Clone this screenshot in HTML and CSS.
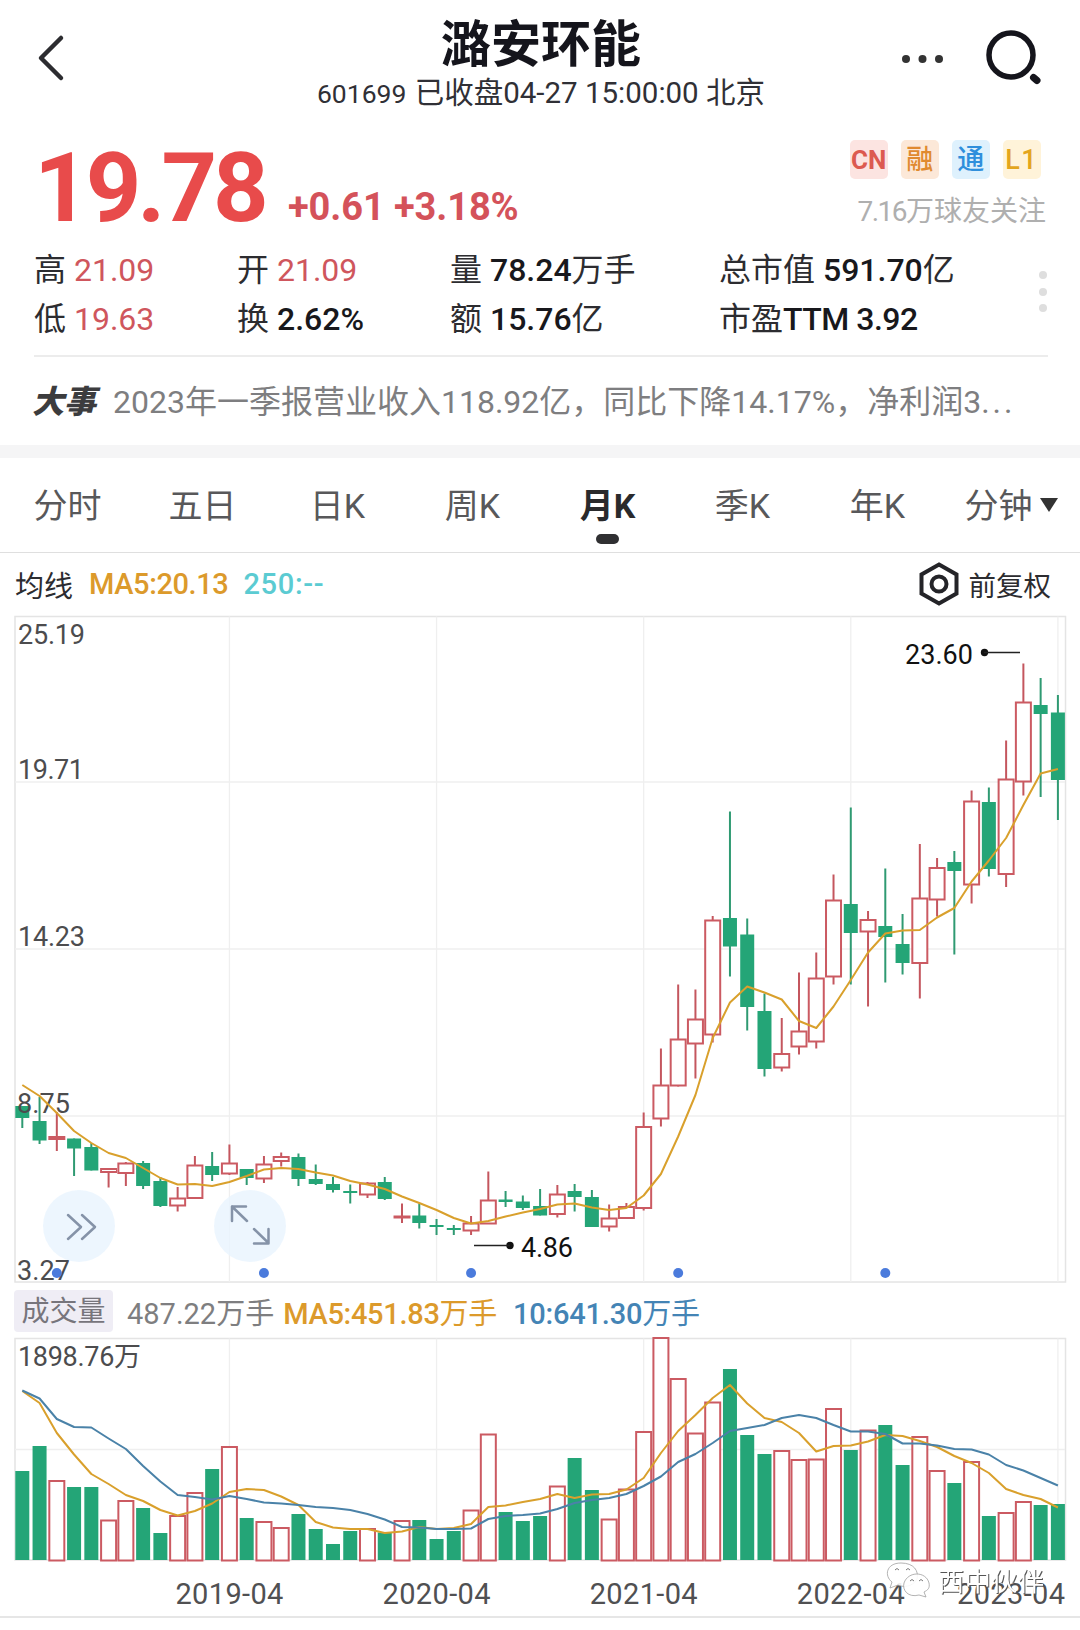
FILE: index.html
```html
<!DOCTYPE html>
<html lang="zh-CN">
<head>
    <meta charset="UTF-8">
    <meta name="viewport" content="width=device-width, initial-scale=1.0">
    <title>潞安环能 601699</title>
    <link rel="stylesheet" href="styles.css">
</head>
<body>

    <header class="topbar">
        <svg class="icon-back" width="30" height="48" viewBox="0 0 30 48"><path d="M26 4 L6 24 L26 44"/></svg>
        <div class="title">
            <h1>潞安环能</h1>
            <p><span class="code">601699</span> 已收盘04-27 15:00:00 北京</p>
        </div>
        <svg class="icon-more" width="44" height="10" viewBox="0 0 44 10"><circle cx="5" cy="5" r="4"/><circle cx="21.500" cy="5" r="4"/><circle cx="38" cy="5" r="4"/></svg>
        <svg class="icon-search" width="58" height="58" viewBox="0 0 58 58"><circle cx="27" cy="27" r="22"/><path d="M49.500 49.500 L53 52.500"/></svg>
    </header>

    <section class="quote">
        <div class="price">19.78</div>
        <div class="change">+0.61 +3.18%</div>
        <div class="side">
            <div class="tags">
                <span class="tag tag-cn">CN</span>
                <span class="tag tag-rong">融</span>
                <span class="tag tag-tong">通</span>
                <span class="tag tag-l1">L1</span>
            </div>
            <div class="followers"><span>7.16</span>万球友关注</div>
        </div>
    </section>

    <section class="stats">
        <div>高 <b class="up">21.09</b></div>
        <div>开 <b class="up">21.09</b></div>
        <div>量 <b>78.24</b><em>万手</em></div>
        <div>总市值 <b>591.70</b><em>亿</em></div>
        <div>低 <b class="up">19.63</b></div>
        <div>换 <b>2.62%</b></div>
        <div>额 <b>15.76</b><em>亿</em></div>
        <div>市盈<b class="ttm">TTM 3.92</b></div>
        <div class="dots"><i></i><i></i><i></i></div>
    </section>

    <section class="news">
        <strong>大事</strong>
        <span>2023年一季报营业收入118.92亿，同比下降14.17%，净利润3<i>...</i></span>
    </section>

    <nav class="tabs">
        <span>分时</span>
        <span>五日</span>
        <span>日K</span>
        <span>周K</span>
        <span class="active">月K</span>
        <span>季K</span>
        <span>年K</span>
        <span>分钟<i class="caret"></i></span>
    </nav>

    <div class="legend">
        <span class="name">均线</span>
        <span class="ma5">MA5:20.13</span>
        <span class="ma250">250:--</span>
        <span class="adjust">
            <svg width="42" height="44" viewBox="0 0 42 44"><path d="M21 2.500 L38.500 12.500 V31.500 L21 41.500 L3.500 31.500 V12.500 Z"/><circle cx="21" cy="22" r="7.500"/></svg>
            前复权
        </span>
    </div>

    <svg class="chart" id="priceChart" width="1080" height="670" viewBox="0 615 1080 670"></svg>

    <div class="vol-legend">
        <span class="badge">成交量</span>
        <span class="total">487.22万手</span>
        <span class="ma5">MA5:451.83<em>万手</em></span>
        <span class="ma10">10:641.30<em>万手</em></span>
    </div>

    <svg class="chart" id="volumeChart" width="1080" height="226" viewBox="0 1336 1080 226"></svg>

    <footer class="dates">
        <svg id="dateAxis" width="1080" height="54" viewBox="0 1562 1080 54"></svg>
    </footer>

    <script src="script.js"></script>
</body>
</html>
```
FILE: styles.css
```css
* {
    margin: 0;
    padding: 0;
    box-sizing: border-box;
}

body {
    width: 1080px;
    height: 1630px;
    overflow: hidden;
    background-color: #fff;
    color: #2c2c30;
    font-family: Roboto, "Noto Sans CJK SC", sans-serif;
}

svg {
    display: block;
    flex-shrink: 0;
}

em {
    font-style: normal;
    font-weight: 400;
}

/* header */
.topbar {
    display: flex;
    height: 116px;
    padding-left: 35px;
}

.icon-back {
    margin-top: 34px;
    fill: none;
    stroke: #2c2c30;
    stroke-width: 4.5;
    stroke-linecap: round;
    stroke-linejoin: round;
}

.title {
    width: 600px;
    margin-left: 176px;
    text-align: center;
    white-space: nowrap;
}

.title h1 {
    margin-top: 12px;
    font-size: 50px;
    line-height: 66px;
    font-weight: 700;
    color: #15151c;
}

.title p {
    margin-top: -2px;
    font-size: 29.5px;
    line-height: 34px;
    color: #303036;
}

.title .code {
    margin-right: 1px;
    font-size: 26.5px;
}

.icon-more {
    margin: 54px 0 0 60px;
    fill: #333;
}

.icon-search {
    margin: 28px 0 0 39px;
    fill: none;
    stroke: #15151c;
    stroke-width: 5.5;
    stroke-linecap: round;
}

.icon-search path {
    stroke-width: 7;
}

/* last price */
.quote {
    display: flex;
    height: 130px;
    padding-left: 34px;
    color: #e84b4b;
    font-weight: 700;
    white-space: nowrap;
}

.price {
    width: 254px;
    margin-top: 24px;
    font-size: 97px;
    line-height: 96px;
    letter-spacing: -4px;
}

.change {
    margin-top: 69px;
    font-size: 38px;
    line-height: 44px;
    color: #d4525a;
    letter-spacing: -0.1px;
}

.side {
    margin-left: auto;
    padding: 24px 34px 0 0;
}

.tags {
    display: flex;
    justify-content: flex-end;
    gap: 12.5px;
    padding-right: 5px;
}

.tag {
    width: 38.5px;
    height: 39px;
    border-radius: 5px;
    font-size: 27px;
    line-height: 40px;
    font-weight: 500;
    text-align: center;
}

.tag-cn {
    background-color: #fce4e1;
    color: #dc5a50;
    font-size: 26px;
    font-weight: 700;
}

.tag-rong {
    background-color: #fce8d8;
    color: #e08a30;
}

.tag-tong {
    background-color: #def1fd;
    color: #2f8fdc;
}

.tag-l1 {
    background-color: #fff3d9;
    color: #e3a51d;
    letter-spacing: 1.5px;
}

.followers {
    margin-top: 15px;
    font-size: 28px;
    line-height: 36px;
    font-weight: 400;
    color: #afafaf;
    text-align: right;
}

.followers span {
    letter-spacing: -1.5px;
}

/* stats */
.stats {
    position: relative;
    display: grid;
    grid-template-columns: 203px 213px 269px 1fr;
    grid-auto-rows: 49px;
    height: 111px;
    margin: 0 32px 0 34px;
    border-bottom: 2px solid #ececec;
    font-size: 32px;
    line-height: 48px;
    white-space: nowrap;
}

.stats b {
    color: #18181c;
    font-weight: 500;
}

.stats .up {
    color: #cf565d;
    font-weight: 400;
}

.stats .ttm {
    letter-spacing: -0.5px;
}

.dots {
    position: absolute;
    right: 1px;
    top: 25px;
}

.dots i {
    display: block;
    width: 8px;
    height: 8px;
    margin-bottom: 8.5px;
    border-radius: 50%;
    background-color: #dedede;
}

/* news line */
.news {
    display: flex;
    align-items: center;
    height: 88px;
    padding: 0 0 4px 32px;
    font-size: 32px;
    color: #7e7e80;
    white-space: nowrap;
}

.news strong {
    margin-right: 17px;
    font-weight: 900;
    font-style: italic;
    color: #3c3c3e;
}

.news i {
    font-style: normal;
    letter-spacing: 3px;
}

/* period tabs */
.tabs {
    display: grid;
    grid-template-columns: repeat(8, 135px);
    height: 108px;
    border-top: 13px solid #f5f5f6;
    border-bottom: 1px solid #dfdfdf;
    font-size: 34px;
    line-height: 97px;
    color: #58585a;
    text-align: center;
    white-space: nowrap;
}

.tabs .active {
    position: relative;
    color: #2a2a2c;
    font-weight: 700;
}

.tabs .active::after {
    content: "";
    position: absolute;
    left: 56px;
    top: 76px;
    width: 23px;
    height: 10px;
    border-radius: 5px;
    background-color: #303032;
}

.tabs span:last-child {
    margin-left: -3px;
}

.caret {
    display: inline-block;
    margin: 0 0 6px 7px;
    border: 9px solid transparent;
    border-top: 14px solid #333;
    border-bottom: 0;
}

/* chart legends */
.legend {
    display: flex;
    align-items: center;
    height: 62px;
    padding: 0 29px 0 15px;
    font-size: 29px;
    white-space: nowrap;
}

.ma5 {
    color: #dc9a2b;
    font-weight: 500;
}

.legend .ma5 {
    margin: 0 15px 0 16px;
    letter-spacing: -0.4px;
}

.ma250 {
    color: #5bcbd2;
    font-weight: 500;
    letter-spacing: 0.7px;
}

.adjust {
    display: flex;
    align-items: center;
    gap: 9px;
    margin-left: auto;
    font-size: 27.5px;
}

.adjust svg {
    fill: none;
    stroke: #242428;
    stroke-width: 4;
}

.vol-legend {
    display: flex;
    align-items: center;
    height: 51px;
    padding: 1px 14px 0;
    font-size: 29px;
    white-space: nowrap;
}

.badge {
    width: 99px;
    height: 42px;
    margin-right: 14px;
    border-radius: 4px;
    background-color: #efedf5;
    font-size: 28px;
    line-height: 43px;
    text-align: center;
    color: #77757c;
}

.total {
    margin-right: 9px;
    color: #7e7e80;
}

.vol-legend .ma5 {
    letter-spacing: -0.3px;
}

.ma10 {
    margin-left: 16px;
    color: #4484b5;
    font-weight: 500;
    letter-spacing: -0.2px;
}

.dates {
    border-bottom: 2px solid #e6e6e6;
}

/* chart parts */
.grid {
    fill: none;
    stroke: #efefef;
    stroke-width: 1.3;
}

.frame {
    fill: none;
    stroke: #e4e4e4;
    stroke-width: 1.5;
}

.rise {
    fill: #fff;
    stroke: #cb5a62;
    stroke-width: 2;
}

.fall {
    fill: #24a577;
    stroke: none;
}

.wick-rise {
    stroke: #c4565e;
    stroke-width: 2;
}

.wick-fall {
    stroke: #2f9a72;
    stroke-width: 2;
}

.line5,
.line10 {
    fill: none;
    stroke: #d9a02c;
    stroke-width: 2;
    stroke-linejoin: round;
}

.line10 {
    stroke: #4a82a8;
}

.axis {
    font-size: 27px;
    fill: #4c4c4e;
}

.date {
    font-size: 29px;
    fill: #505052;
}

.mark {
    font-size: 27px;
    fill: #111;
}

.mark-line {
    stroke: #222;
    stroke-width: 1.5;
}

.mark-dot {
    fill: #111;
}

.event {
    fill: #4b7bdc;
}

.round {
    fill: #e8f4fe;
    fill-opacity: 0.8;
}

.round-icon {
    fill: none;
    stroke: #8593a8;
    stroke-width: 2.5;
    stroke-linecap: round;
    stroke-linejoin: round;
}

.wm-icon {
    fill: #fff;
    fill-opacity: 0.9;
    stroke: #a0a0a0;
    stroke-width: 0.8;
}

.wm-eye {
    fill: none;
    stroke: #777;
}

.wm-text {
    font-size: 26px;
    fill: #fff;
    filter: drop-shadow(1.2px 1.2px 0 #555);
}
```
FILE: script.js
```js
// one row per month: direction, high, body top, body bottom, low, volume top
var months = [
    ['g', 1106, 1106, 1118, 1128, 1471],
    ['g', 1097, 1121, 1140.5, 1144, 1446],
    ['r', 1112, 1137, 1139, 1151, 1481],
    ['g', 1138.5, 1138.5, 1148.5, 1176, 1487],
    ['g', 1143, 1147, 1170.5, 1170.5, 1487],
    ['r', 1169, 1169, 1172, 1187.5, 1520.5],
    ['r', 1162, 1163.5, 1173, 1186, 1501],
    ['g', 1161, 1163, 1186, 1189, 1508],
    ['g', 1177, 1181, 1206, 1207, 1533],
    ['r', 1187, 1198.5, 1205.5, 1211.5, 1516],
    ['r', 1156, 1165.5, 1198, 1198, 1493],
    ['g', 1152, 1166, 1175, 1181, 1469],
    ['r', 1144.5, 1163.5, 1173.5, 1175, 1447],
    ['g', 1169, 1169, 1178, 1185, 1518],
    ['r', 1156, 1164.5, 1178.5, 1183, 1522],
    ['r', 1152.5, 1157, 1161, 1166.5, 1528],
    ['g', 1153.5, 1157, 1179, 1186, 1514],
    ['g', 1164.5, 1179, 1184, 1185, 1529],
    ['g', 1177, 1184, 1190, 1192.5, 1544],
    ['g', 1184.5, 1191, 1193, 1203.5, 1531],
    ['r', 1182, 1183.5, 1194.5, 1198, 1529],
    ['g', 1177, 1182, 1199, 1200, 1532.5],
    ['r', 1203.5, 1216.5, 1217.5, 1223, 1521],
    ['g', 1203.5, 1215.5, 1223, 1228.5, 1520],
    ['g', 1219, 1225, 1227, 1235, 1539],
    ['g', 1225, 1228, 1230, 1235, 1531],
    ['r', 1216, 1223.5, 1230.5, 1235, 1510.5],
    ['r', 1171.5, 1200.5, 1223.5, 1224, 1434.5],
    ['g', 1191, 1199.5, 1202, 1207, 1512],
    ['g', 1195.5, 1201.5, 1208, 1210, 1521],
    ['g', 1189, 1206, 1215.5, 1215.5, 1516],
    ['r', 1185, 1194.5, 1214, 1217.5, 1486.5],
    ['g', 1184, 1191, 1197, 1211.5, 1458],
    ['g', 1190, 1197, 1227, 1227, 1490],
    ['r', 1204.5, 1218.5, 1226.5, 1231.5, 1519.5],
    ['r', 1203, 1207, 1218, 1218, 1489.5],
    ['r', 1112.5, 1127, 1208, 1210.5, 1432],
    ['r', 1048.5, 1085.5, 1118.5, 1126.5, 1338],
    ['r', 984.5, 1039.5, 1085.5, 1086.5, 1379],
    ['r', 989.5, 1019.5, 1043.5, 1078.5, 1433.5],
    ['r', 916, 920.5, 1034.5, 1042.5, 1402.5],
    ['g', 811.5, 918, 946.5, 976.5, 1369],
    ['g', 918.5, 934.5, 1007, 1030.5, 1435],
    ['g', 993.5, 1011, 1069, 1076.5, 1454],
    ['r', 1018, 1054, 1067.5, 1071.5, 1451],
    ['r', 972.5, 1031.5, 1046.5, 1054.5, 1460],
    ['r', 952.5, 978.5, 1041.5, 1048.5, 1459.5],
    ['r', 874.5, 900.5, 976.5, 984.5, 1409],
    ['g', 807.5, 904, 933, 984.5, 1450],
    ['r', 911, 920, 931.5, 1006.5, 1430.5],
    ['g', 868.5, 926, 937, 982.5, 1425],
    ['g', 914, 944, 963, 974.5, 1465],
    ['r', 844, 898.5, 963, 998.5, 1437],
    ['r', 858, 868, 899.5, 916.5, 1471],
    ['g', 851, 862, 871, 954.5, 1483],
    ['r', 790.5, 801.5, 884.5, 903.5, 1462],
    ['g', 787.5, 802, 869, 876.5, 1516],
    ['r', 740.5, 779.5, 874, 887, 1513],
    ['r', 663.5, 702.5, 781.5, 795.5, 1502],
    ['g', 678, 705, 714, 797, 1505],
    ['g', 695, 712.5, 780, 820, 1504]
];

var priceMa5 = [1085, 1096, 1113, 1131, 1143, 1153, 1158, 1168, 1178, 1184.5, 1184, 1186, 1182, 1176, 1169.5, 1168, 1169, 1172.5, 1175.5, 1181, 1184.5, 1189, 1196.5, 1203, 1210, 1218, 1223.5, 1221, 1216.5, 1212.5, 1209, 1204.5, 1203.5, 1207.5, 1210, 1208, 1195.5, 1174, 1136.5, 1095, 1038, 1002.5, 986.5, 992.5, 999.5, 1021, 1028, 1006.5, 980, 952.5, 933.5, 930.5, 930, 917.5, 908, 881.5, 860.5, 838, 805, 773.5, 769];
var volMa5 = [1391, 1403, 1433, 1454.5, 1474, 1484, 1495, 1501, 1510, 1515.5, 1511, 1503.5, 1492, 1489, 1490, 1496.5, 1505, 1522, 1527.5, 1529, 1529, 1533, 1531.5, 1527, 1529, 1528, 1524, 1507, 1505.5, 1502, 1499, 1494, 1498, 1494.5, 1494, 1489.5, 1478, 1453, 1431, 1415, 1398, 1385, 1403.5, 1418, 1422, 1433, 1451.5, 1446, 1445.5, 1441.5, 1435, 1436, 1441, 1447, 1456, 1463, 1473, 1489, 1495, 1499, 1507.5];
var volMa10 = [1390.5, 1398.5, 1419, 1427, 1427.5, 1438.5, 1449, 1466, 1481.5, 1495, 1497, 1499.5, 1496, 1499, 1502.5, 1503.5, 1505, 1507, 1508, 1510, 1514, 1519.5, 1527, 1527.5, 1529, 1529, 1528.5, 1519, 1516, 1515, 1513.5, 1509, 1503, 1500, 1498, 1494, 1486, 1476.5, 1462, 1454, 1443, 1431, 1428, 1425, 1418, 1415, 1418, 1425, 1431.5, 1431.5, 1434, 1443.5, 1443.5, 1445.5, 1449, 1449.5, 1454.5, 1465, 1470.5, 1478, 1485.5];

function px(i) {
    return 22.3 + i * 17.26;
}

function rect(cls, x, y, w, h) {
    return `<rect class="${cls}" x="${x}" y="${y}" width="${w}" height="${h}"/>`;
}

function line(cls, x1, y1, x2, y2) {
    return `<line class="${cls}" x1="${x1}" y1="${y1}" x2="${x2}" y2="${y2}"/>`;
}

function dot(cls, x, y, r) {
    return `<circle class="${cls}" cx="${x}" cy="${y}" r="${r}"/>`;
}

function text(cls, x, y, w, str) {
    return `<text class="${cls}" x="${x}" y="${y}" textLength="${w}">${str}</text>`;
}

function curve(cls, values) {
    return `<polyline class="${cls}" points="${values.map((y, i) => px(i) + ',' + y).join(' ')}"/>`;
}

function bar(dir, i, top, bottom) {
    if (dir === 'g') {
        return rect('fall', px(i) - 7, top, 14, bottom - top);
    }
    return rect('rise', px(i) - 7.5, top, 15, bottom - top);
}

function gridLines(top, bottom, rows) {
    var out = rect('frame', 15, top, 1050.5, bottom - top);
    for (var i = 12; i <= 60; i += 12) {
        out += line('grid', px(i), top, px(i), bottom);
    }
    rows.forEach(y => out += line('grid', 15, y, 1065, y));
    return out;
}

// price chart
var price = gridLines(616.5, 1282, [782, 949, 1116]);
price += dot('round', 79, 1226, 36) + dot('round', 250, 1226, 36);
months.forEach((m, i) => {
    price += line(m[0] === 'g' ? 'wick-fall' : 'wick-rise', px(i), m[1], px(i), m[4]);
    price += bar(m[0], i, m[2], m[3]);
});
price += text('axis', 18, 643.5, 67, '25.19');
price += text('axis', 18, 778.5, 66, '19.71');
price += text('axis', 18, 945.5, 67, '14.23');
price += text('axis', 17, 1112.5, 53, '8.75');
price += text('axis', 17, 1279.5, 53, '3.27');
price += curve('line5', priceMa5);
for (var i = 2; i < 60; i += 12) {
    price += dot('event', px(i), 1273, 5);
}
price += text('mark', 905, 663.5, 68, '23.60') + dot('mark-dot', 984.5, 652.5, 3.7) + line('mark-line', 984, 652.5, 1020, 652.5);
price += text('mark', 521, 1257, 52, '4.86') + dot('mark-dot', 510, 1245.5, 3.7) + line('mark-line', 474, 1245.5, 510, 1245.5);
price += '<path class="round-icon" d="M68 1215 L81 1227 L68 1239 M82 1215 L95 1227 L82 1239"/>';
price += '<path class="round-icon" d="M246 1206.500 H232 V1221 M232 1206.500 L247 1221 M254 1229 L268.500 1243 M268.500 1229 V1243.500 H254"/>';
document.getElementById('priceChart').innerHTML = price;

// volume chart
var volume = gridLines(1338.5, 1560, [1449.5]);
months.forEach((m, i) => volume += bar(m[0], i, m[5], m[0] === 'g' ? 1560 : 1560.5));
volume += curve('line5', volMa5) + curve('line10', volMa10);
volume += text('axis', 18, 1366, 123, '1898.76万');
document.getElementById('volumeChart').innerHTML = volume;

// dates and watermark
var axis = '';
['2019-04', '2020-04', '2021-04', '2022-04'].forEach((d, n) => {
    axis += text('date', px(12 + n * 12) - 54, 1603.5, 108, d);
});
axis += text('date', 957, 1603.5, 108, '2023-04');
axis += '<path class="wm-icon" d="M890 1588 L892 1582 C884 1576 886 1563 901 1563 C914 1563 919 1571 917 1579 C912 1588 902 1587 898 1585 Z"/>';
axis += '<path class="wm-icon" d="M926 1597 L919 1595 C908 1598 902 1590 904 1583 C908 1571 926 1571 929 1583 C930 1588 928 1590 924 1592 Z"/>';
axis += '<path class="wm-eye" d="M895 1570 q2 -3 4 0 M906 1570 q2 -3 4 0 M910 1581 q2 -3 4 0 M919 1581 q2 -3 4 0"/>';
axis += text('wm-text', 938, 1591, 106, '西中伙伴');
document.getElementById('dateAxis').innerHTML = axis;
```
